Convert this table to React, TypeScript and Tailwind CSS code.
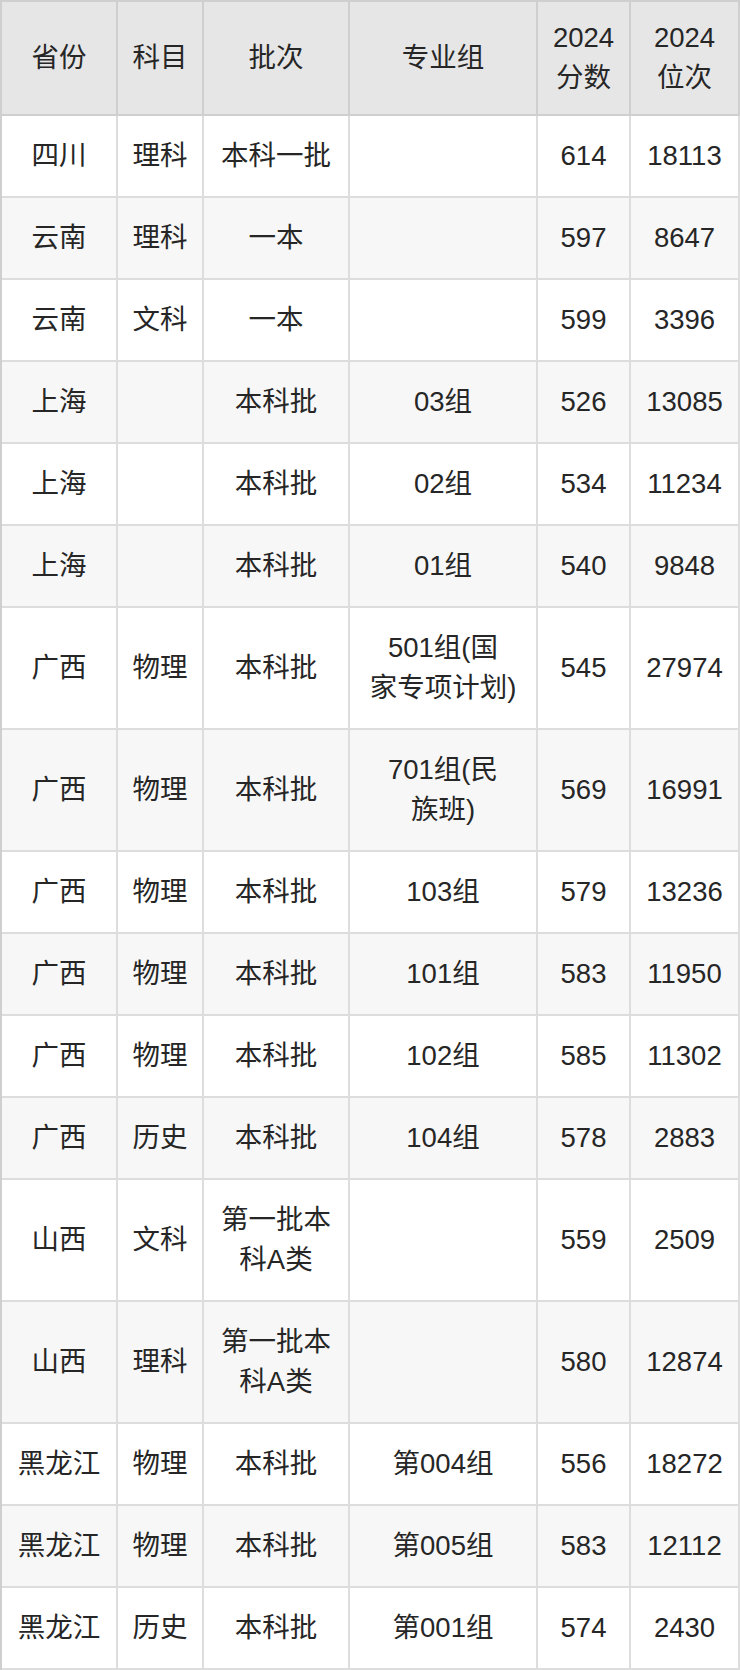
import React from 'react'

type Row = {
  province: string
  subject: string
  batch: string[]
  group: string[]
  score: string
  rank: string
}

const rows: Row[] = [
  { province: '四川', subject: '理科', batch: ['本科一批'], group: [''], score: '614', rank: '18113' },
  { province: '云南', subject: '理科', batch: ['一本'], group: [''], score: '597', rank: '8647' },
  { province: '云南', subject: '文科', batch: ['一本'], group: [''], score: '599', rank: '3396' },
  { province: '上海', subject: '', batch: ['本科批'], group: ['03组'], score: '526', rank: '13085' },
  { province: '上海', subject: '', batch: ['本科批'], group: ['02组'], score: '534', rank: '11234' },
  { province: '上海', subject: '', batch: ['本科批'], group: ['01组'], score: '540', rank: '9848' },
  { province: '广西', subject: '物理', batch: ['本科批'], group: ['501组(国', '家专项计划)'], score: '545', rank: '27974' },
  { province: '广西', subject: '物理', batch: ['本科批'], group: ['701组(民', '族班)'], score: '569', rank: '16991' },
  { province: '广西', subject: '物理', batch: ['本科批'], group: ['103组'], score: '579', rank: '13236' },
  { province: '广西', subject: '物理', batch: ['本科批'], group: ['101组'], score: '583', rank: '11950' },
  { province: '广西', subject: '物理', batch: ['本科批'], group: ['102组'], score: '585', rank: '11302' },
  { province: '广西', subject: '历史', batch: ['本科批'], group: ['104组'], score: '578', rank: '2883' },
  { province: '山西', subject: '文科', batch: ['第一批本', '科A类'], group: [''], score: '559', rank: '2509' },
  { province: '山西', subject: '理科', batch: ['第一批本', '科A类'], group: [''], score: '580', rank: '12874' },
  { province: '黑龙江', subject: '物理', batch: ['本科批'], group: ['第004组'], score: '556', rank: '18272' },
  { province: '黑龙江', subject: '物理', batch: ['本科批'], group: ['第005组'], score: '583', rank: '12112' },
  { province: '黑龙江', subject: '历史', batch: ['本科批'], group: ['第001组'], score: '574', rank: '2430' },
]

const lines = (parts: string[]) =>
  parts.map((p, i) => (
    <React.Fragment key={i}>
      {i > 0 && <br />}
      {p}
    </React.Fragment>
  ))

const th = 'border-r-2 border-b-2 border-[#cfcfcf] py-4 px-1 text-center font-normal align-middle'
const td = 'border-r-2 border-b-2 border-[#dddddd] py-5 px-1 text-center align-middle'

export default function App() {
  return (
    <div className="w-[740px] bg-white">
      <table
        className="w-[740px] table-fixed border-separate border-spacing-0 border-t-2 border-l-2 border-[#cfcfcf] text-[27.5px] leading-[40px] text-[#262626]"
        style={{ fontFamily: '"Liberation Sans", "Noto Sans CJK SC", sans-serif' }}
      >
        <colgroup>
          <col className="w-[116px]" />
          <col className="w-[86px]" />
          <col className="w-[146px]" />
          <col className="w-[188px]" />
          <col className="w-[93px]" />
          <col className="w-[109px]" />
        </colgroup>
        <thead>
          <tr className="bg-[#e6e6e6]">
            <th className={th}>省份</th>
            <th className={th}>科目</th>
            <th className={th}>批次</th>
            <th className={th}>专业组</th>
            <th className={th}>
              2024
              <br />
              分数
            </th>
            <th className={th}>
              2024
              <br />
              位次
            </th>
          </tr>
        </thead>
        <tbody>
          {rows.map((r, i) => (
            <tr key={i} className={i % 2 === 1 ? 'bg-[#f7f7f7]' : 'bg-white'}>
              <td className={td}>{r.province}</td>
              <td className={td}>{r.subject}</td>
              <td className={td}>{lines(r.batch)}</td>
              <td className={td}>{lines(r.group)}</td>
              <td className={td}>{r.score}</td>
              <td className={td}>{r.rank}</td>
            </tr>
          ))}
        </tbody>
      </table>
    </div>
  )
}
